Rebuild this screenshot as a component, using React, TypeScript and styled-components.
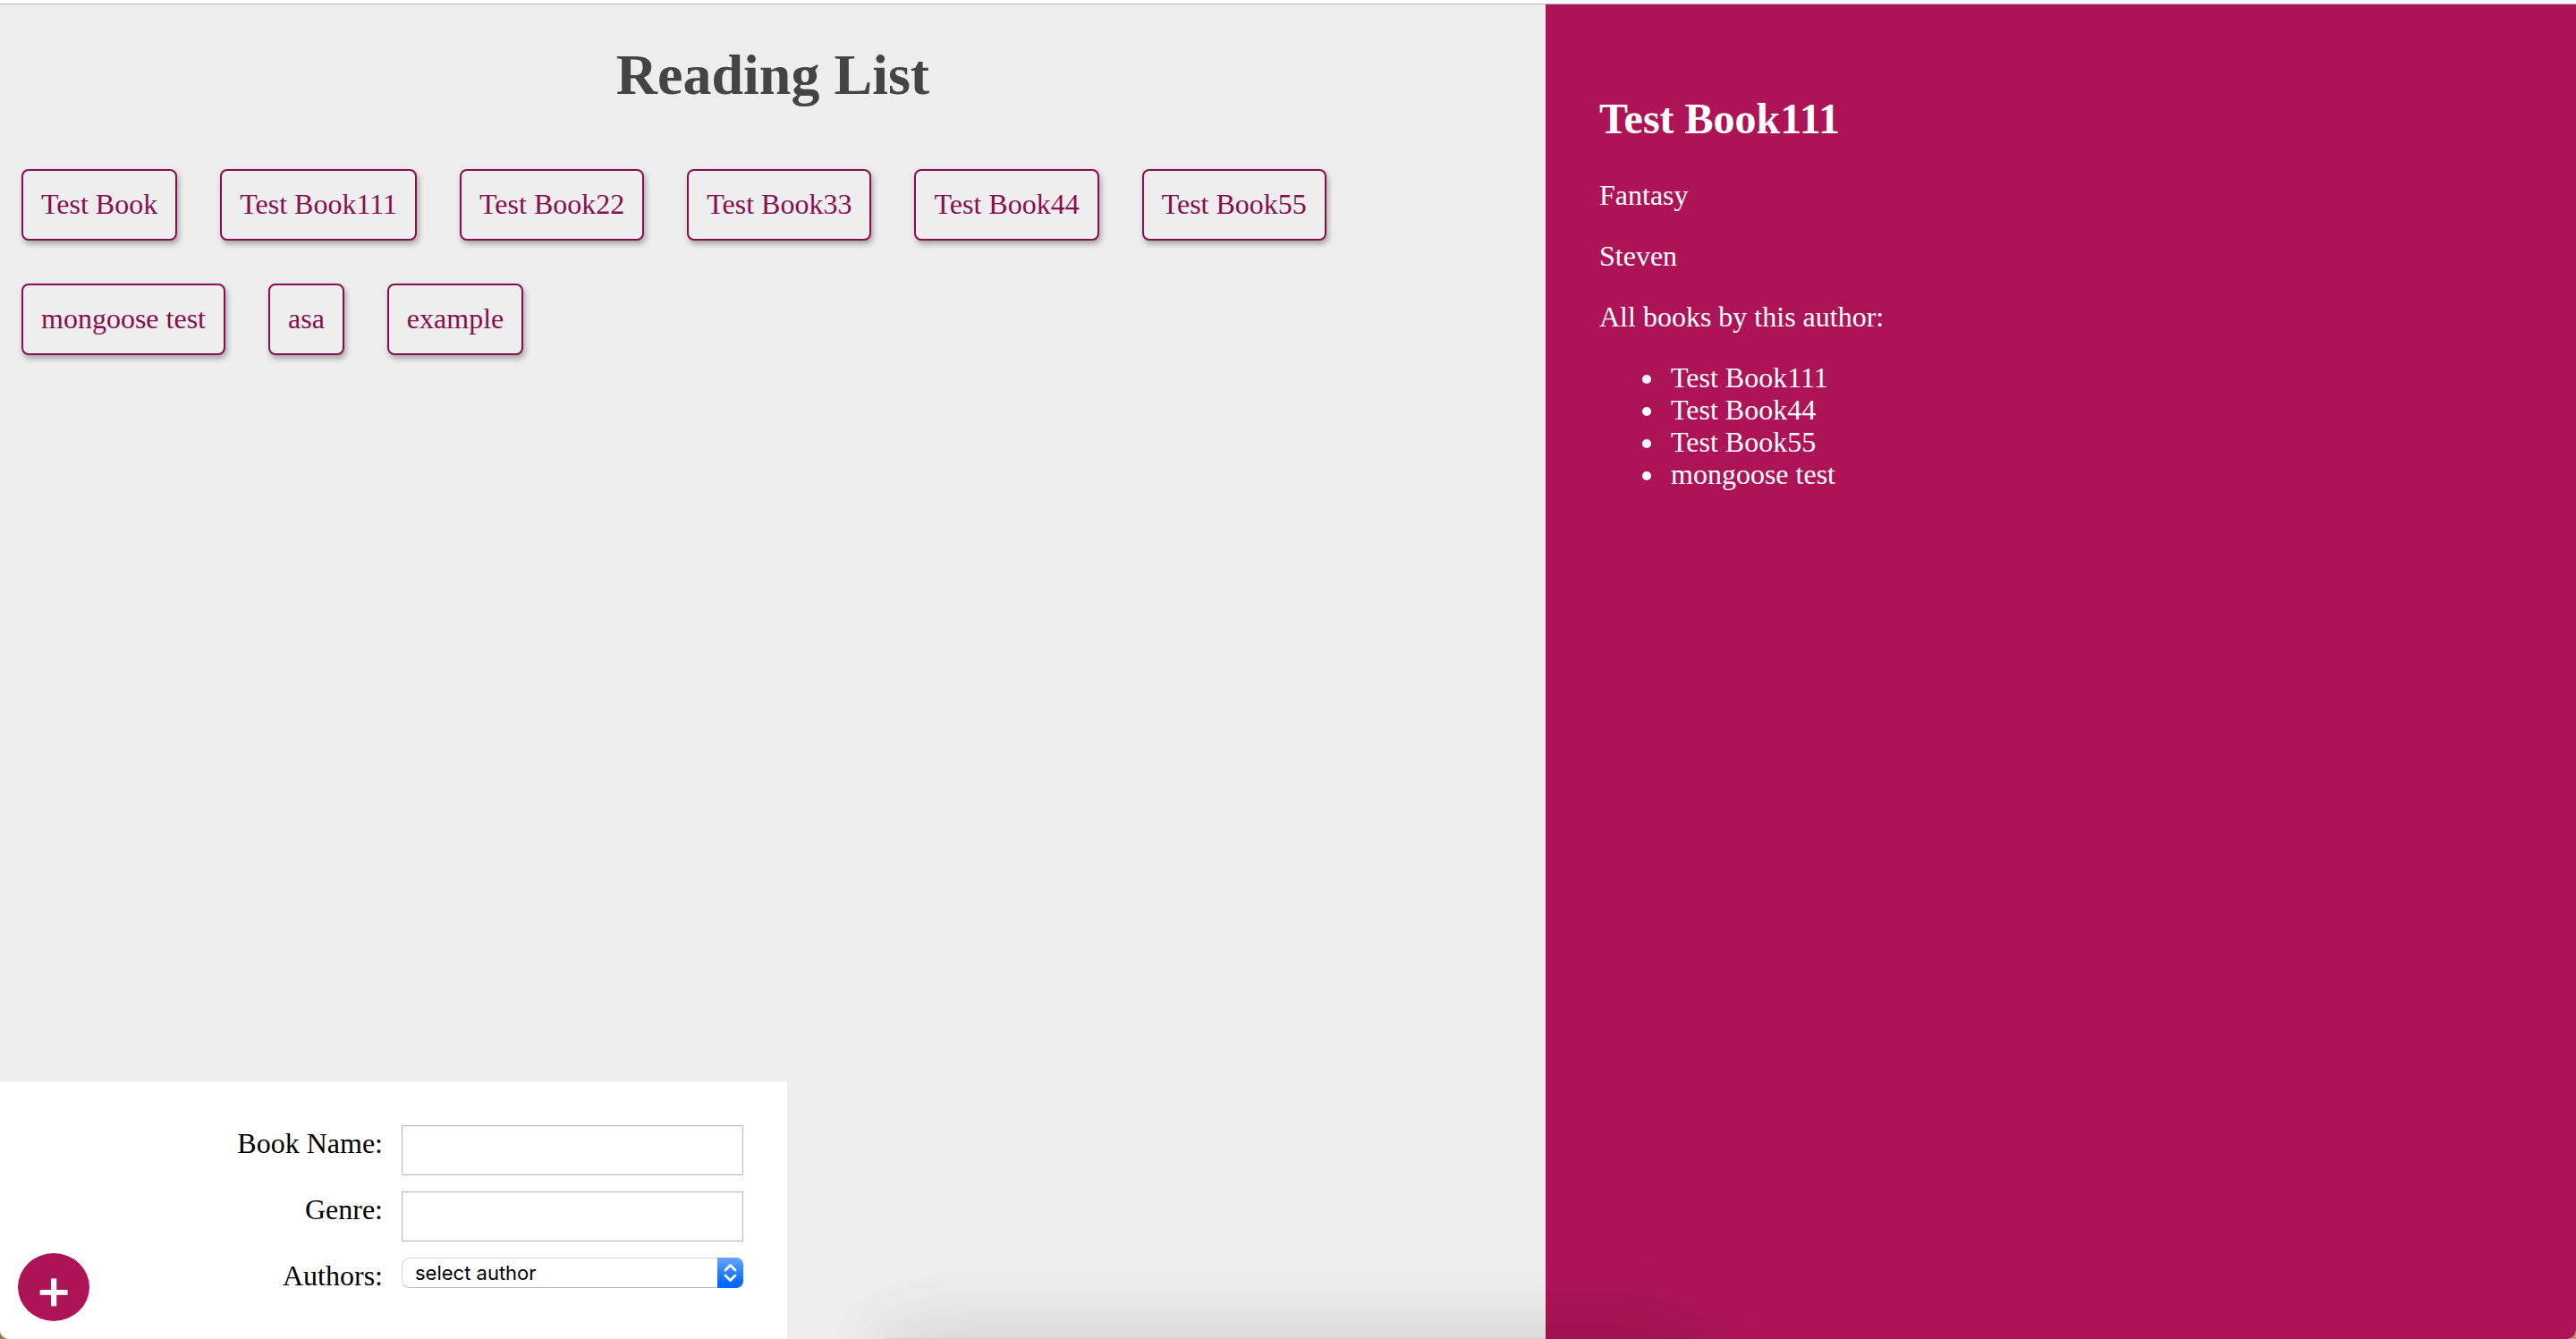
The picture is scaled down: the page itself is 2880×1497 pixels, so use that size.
import React, { useState } from "react";
import styled, { createGlobalStyle } from "styled-components";

const GlobalStyle = createGlobalStyle`
  *, *::before, *::after { box-sizing: border-box; }
  body {
    margin: 0;
    background: linear-gradient(90deg, #a07a4c, #b89a62);
    font-family: "Liberation Serif", "Times New Roman", serif;
    font-size: 32px;
    line-height: 36px;
    color: #000;
  }
`;

const Page = styled.div`
  display: flex;
  flex-direction: column;
  min-height: 100vh;
  overflow: hidden;
  border-radius: 0 0 10px 10px;
  background: #eee;
`;

const WindowEdge = styled.div`
  height: 5px;
  background: #fff;
  border-bottom: 1px solid #b3b3b3;
`;

const Columns = styled.div`
  flex: 1;
  display: grid;
  grid-template-columns: 3fr 2fr;
`;

const Main = styled.main`
  display: flex;
  flex-direction: column;
  align-items: flex-start;
  justify-content: space-between;
`;

const Library = styled.section`
  width: 100%;
`;

const Title = styled.h1`
  margin: 42px 0 44px;
  font-size: 64px;
  line-height: 74px;
  text-align: center;
  color: #444;
`;

const BookList = styled.ul`
  display: flex;
  flex-wrap: wrap;
  gap: 48px;
  margin: 0;
  padding: 24px;
  list-style: none;
`;

const BookButton = styled.button`
  display: block;
  padding: 19px 20px 21px;
  border: 2px solid #880e4f;
  border-radius: 8px;
  background: #eee;
  box-shadow: 2px 4px 6px rgba(0, 0, 0, 0.3);
  color: #880e4f;
  font: inherit;
  cursor: pointer;
`;

const Details = styled.aside`
  padding: 20px 60px 60px;
  background: #ad1457;
  color: #fff;
`;

const DetailsTitle = styled.h2`
  margin: 80px 0 39px;
  font-size: 48px;
  line-height: 56px;
`;

const Line = styled.p`
  margin: 0 0 32px;
`;

const AuthorBooks = styled.ul`
  margin: 0;
  padding-left: 74px;
`;

const AuthorBook = styled.li`
  padding-left: 6px;
`;

const Form = styled.form`
  position: relative;
  display: grid;
  gap: 18px;
  width: 880px;
  max-width: 100%;
  padding: 49px 49px 53px;
  background: #fff;
`;

const Field = styled.div`
  display: grid;
  grid-template-columns: 1fr 382px;
  column-gap: 21px;
  align-items: start;
`;

const Label = styled.label`
  padding-top: 2px;
  text-align: right;
`;

const TextInput = styled.input`
  height: 56px;
  padding: 8px;
  border: 1px solid #bdbdbd;
  box-shadow: inset 0 0 0 1px #f2f2f2;
  background: #fff;
  font: inherit;
`;

const SelectBox = styled.div`
  position: relative;
`;

const Select = styled.select`
  display: block;
  width: 100%;
  height: 34px;
  padding: 0 40px 0 14px;
  appearance: none;
  border: 1px solid #d4d4d4;
  border-bottom-color: #b8b8b8;
  border-radius: 9px;
  background: #fff;
  color: #000;
  font-family: Inter, sans-serif;
  font-size: 22px;
`;

const Stepper = styled.svg`
  position: absolute;
  top: 0;
  right: 0;
  width: 29px;
  height: 34px;
  border-radius: 0 8px 8px 0;
  background: linear-gradient(#6aa5f8, #0068fd 85%);
  pointer-events: none;
`;

const AddButton = styled.button`
  position: absolute;
  left: 20px;
  bottom: 20px;
  width: 80px;
  height: 76px;
  padding: 2px 0 0;
  border: 0;
  border-radius: 50%;
  background: #ad1457;
  color: #fff;
  font: 500 64px/60px Inter, sans-serif;
  cursor: pointer;
`;

const DockShadow = styled.div`
  position: fixed;
  bottom: 0;
  left: 34.4%;
  right: 34.4%;
  height: 1px;
  background: rgba(0, 0, 0, 0.13);
  pointer-events: none;

  &::before {
    content: "";
    position: absolute;
    inset: 0 0 -100px;
    box-shadow: 0 0 90px rgba(0, 0, 0, 0.16);
  }
`;

const books = [
  "Test Book",
  "Test Book111",
  "Test Book22",
  "Test Book33",
  "Test Book44",
  "Test Book55",
  "mongoose test",
  "asa",
  "example",
];

const authorBooks = ["Test Book111", "Test Book44", "Test Book55", "mongoose test"];

export default function App() {
  const [selected, setSelected] = useState("Test Book111");

  return (
    <>
      <GlobalStyle />
      <Page>
        <WindowEdge />
        <Columns>
          <Main>
            <Library>
              <Title>Reading List</Title>
              <BookList>
                {books.map((book) => (
                  <li key={book}>
                    <BookButton type="button" onClick={() => setSelected(book)}>
                      {book}
                    </BookButton>
                  </li>
                ))}
              </BookList>
            </Library>
            <Form onSubmit={(event) => event.preventDefault()}>
              <Field>
                <Label htmlFor="name">Book Name:</Label>
                <TextInput id="name" type="text" />
              </Field>
              <Field>
                <Label htmlFor="genre">Genre:</Label>
                <TextInput id="genre" type="text" />
              </Field>
              <Field>
                <Label htmlFor="author">Authors:</Label>
                <SelectBox>
                  <Select id="author">
                    <option>select author</option>
                    <option>Steven</option>
                  </Select>
                  <Stepper viewBox="0 0 29 34" aria-hidden="true">
                    <path
                      d="M9 14l5.500-5.500 5.500 5.500M9 20l5.500 5.500 5.500-5.500"
                      fill="none"
                      stroke="#fff"
                      strokeWidth="2.800"
                      strokeLinecap="round"
                      strokeLinejoin="round"
                    />
                  </Stepper>
                </SelectBox>
              </Field>
              <AddButton type="submit">+</AddButton>
            </Form>
          </Main>
          <Details>
            <DetailsTitle>{selected}</DetailsTitle>
            <Line>Fantasy</Line>
            <Line>Steven</Line>
            <Line>All books by this author:</Line>
            <AuthorBooks>
              {authorBooks.map((book) => (
                <AuthorBook key={book}>{book}</AuthorBook>
              ))}
            </AuthorBooks>
          </Details>
        </Columns>
      </Page>
      <DockShadow />
    </>
  );
}
